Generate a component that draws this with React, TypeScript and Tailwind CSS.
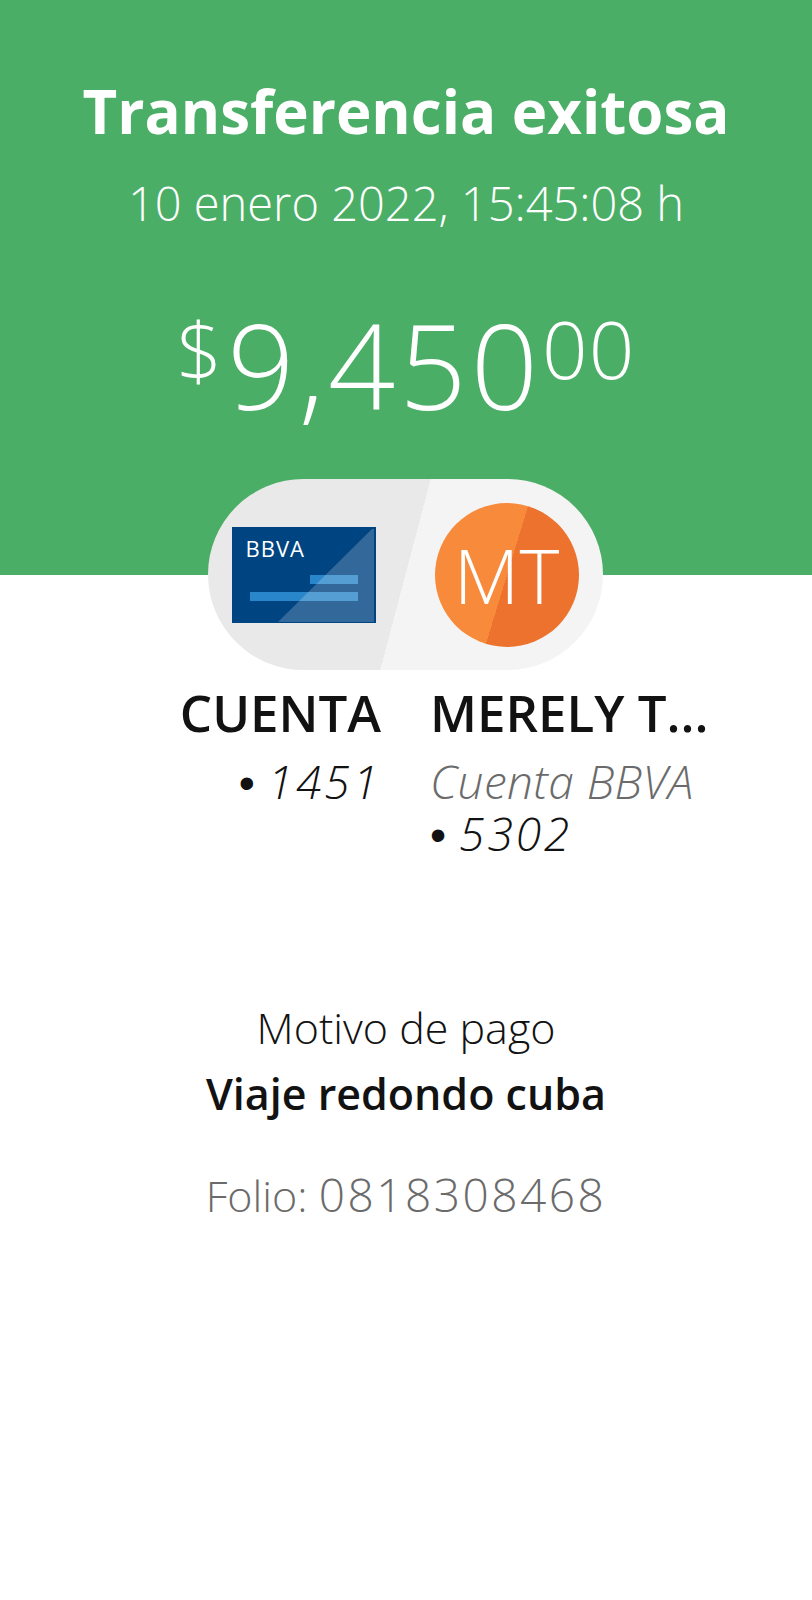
const BbvaCard = () => (
  <div className="relative w-[144px] h-[96px] bg-[#004481] overflow-hidden">
    <svg className="absolute inset-0" width="144" height="96" viewBox="0 0 144 96">
      <rect x="78" y="48" width="48" height="9" fill="#2a86ca" />
      <rect x="18" y="65" width="108" height="9" fill="#2a86ca" />
      <path d="M46 95 L140 2 L142 2 L142 95 Z" fill="#ffffff" fillOpacity="0.2" />
    </svg>
    <span className="absolute left-[14px] top-[9px] text-[22px] leading-[24px] tracking-[1px] text-white">BBVA</span>
  </div>
)

const Bullet = () => <span className="font-['Liberation_Sans',sans-serif] not-italic font-normal mr-[10px]">•</span>

const App = () => {
  return (
    <div className="w-[812px] h-[1600px] bg-white font-['Open_Sans',sans-serif] text-[#121212]">
      <div className="h-[575px] bg-[#4bae66] flex flex-col items-center pt-[70px] text-white">
        <h1 className="text-[60px] leading-[82px] font-bold">Transferencia exitosa</h1>
        <p className="mt-[24px] text-[47px] leading-[54px] font-light">10 enero 2022, 15:45:08 h</p>
        <div className="mt-[76px] flex items-start font-light leading-none">
          <span className="text-[80px] mt-[3px] mr-[5px]">$</span>
          <span className="text-[118px] tracking-[4px]">9,450</span>
          <span className="text-[80px] mt-[2px] tracking-[1px]">00</span>
        </div>
      </div>

      <div className="-mt-[96px] flex justify-center pr-[2px]">
        <div className="w-[395px] h-[191px] rounded-full bg-[linear-gradient(104.8deg,#e9e9e9_50%,#f4f4f4_50%)] flex items-center justify-between pl-[24px] pr-[24px]">
          <BbvaCard />
          <div className="w-[144px] h-[144px] rounded-full bg-[linear-gradient(107deg,#f78a3b_50%,#ec722d_50%)] flex items-center justify-center text-white text-[76px] font-light leading-none">
            MT
          </div>
        </div>
      </div>

      <div className="mt-[14px] flex text-[51px] leading-[56px]">
        <div className="w-[381px] text-right">
          <div className="font-semibold">CUENTA</div>
          <div className="mt-[15px] text-[46px] leading-[52px] italic font-light tracking-[3px]"><Bullet />1451</div>
        </div>
        <div className="ml-[49px] w-[320px]">
          <div className="font-semibold">MERELY T...</div>
          <div className="mt-[15px] text-[46px] leading-[52px] italic font-light tracking-[0.4px] text-[#6b6b6b]">Cuenta BBVA</div>
          <div className="text-[46px] leading-[52px] italic font-light tracking-[3px]"><Bullet />5302</div>
        </div>
      </div>

      <div className="mt-[134px] flex flex-col items-center leading-[66px]">
        <p className="text-[43px] font-light">Motivo de pago</p>
        <p className="text-[43px] font-semibold">Viaje redondo cuba</p>
        <p className="mt-[34px] text-[43px] font-light text-[#6b6b6b]">Folio: <span className="text-[46px] tracking-[2.5px]">0818308468</span></p>
      </div>
    </div>
  )
}

export default App
